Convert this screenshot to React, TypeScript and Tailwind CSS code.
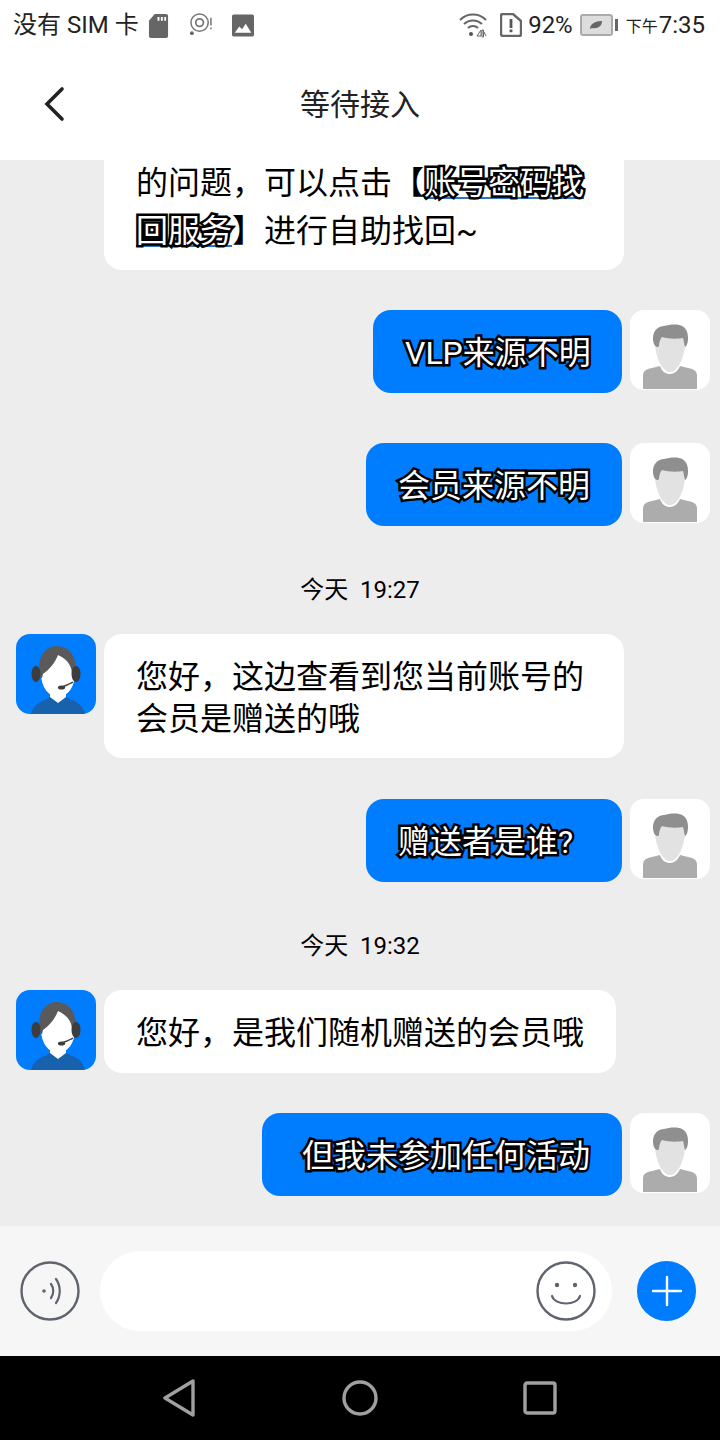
const font = "font-['Roboto','Noto_Sans_CJK_SC',sans-serif]";
const outlined = "[-webkit-text-stroke:5px_#000] [paint-order:stroke_fill]";

function UserAvatar() {
  return (
    <div className="w-[80px] h-[80px] rounded-[14px] bg-white shrink-0 overflow-hidden">
      <svg viewBox="0 0 80 80" className="w-full h-full">
        <path d="M13 79V66c0-5 3-7 9-8l8-2c2 6 6 8 10 8s8-3 10-8l8 2c6 1 9 3 9 8v13z" fill="#acacac" />
        <path d="M33 42h14v14c-2 4-4 6-7 6s-5-2-7-6z" fill="#e2e2e2" />
        <path d="M40 20c9 0 15 4 15 13 0 11-6 29-15 29s-15-18-15-29c0-9 6-13 15-13z" fill="#e2e2e2" />
        <path d="M27 37c-3-1-4-5-4-9 0-8 6-12 11-12 4-1 10-2 15-1 6 1 9 6 9 13 0 4-1 8-3 9-1-3-1-6-2-9-5 1-15 1-21-1-2 2-3 6-3 9-1 1-1 1-2 1z" fill="#8f8f8f" />
      </svg>
    </div>
  );
}

function AgentAvatar() {
  return (
    <div className="w-[80px] h-[80px] rounded-[14px] bg-[#007cff] shrink-0 overflow-hidden">
      <svg viewBox="0 0 80 80" className="w-full h-full">
        <path d="M15 80c2-8 8-12 14-14l5-3 8 5 8-5 6 3c6 2 11 6 13 14z" fill="#1761ad" />
        <path d="M34 54h16v9l-8 6-8-6z" fill="#fff" />
        <ellipse cx="42" cy="40" rx="17" ry="23" fill="#fff" />
        <path d="M25 44C19 26 28 12 41 12c14 0 22 14 18 32l-3 0c1-10-3-18-14-23-3 8-9 15-15 19l-1 4z" fill="#5a5a5a" />
        <ellipse cx="20" cy="40" rx="4.5" ry="8" fill="#3d3d3d" />
        <ellipse cx="60" cy="40" rx="4.5" ry="8" fill="#3d3d3d" />
        <path d="M57 48c-3 2-6 3-11 5" stroke="#3d3d3d" strokeWidth="1.5" fill="none" />
        <ellipse cx="45.5" cy="53.5" rx="3.6" ry="2" fill="#3d3d3d" />
      </svg>
    </div>
  );
}

function Right({ text, width, mt, pl = "pl-[32px]" }: { text: string; width: string; mt: string; pl?: string }) {
  return (
    <div className={`flex justify-end items-start gap-2 pr-[10px] ${mt}`}>
      <div className={`${width} ${pl} pr-[32px] pt-[23px] pb-[19px] rounded-[18px] bg-[#007cff] text-white text-[32px] leading-[41px] whitespace-nowrap ${outlined}`}>
        {text}
      </div>
      <UserAvatar />
    </div>
  );
}

function Left({ children, width, mt, pb }: { children: React.ReactNode; width: string; mt: string; pb: string }) {
  return (
    <div className={`flex items-start gap-2 pl-[16px] ${mt}`}>
      <AgentAvatar />
      <div className={`${width} px-[32px] pt-[22px] ${pb} rounded-[18px] bg-white text-black text-[32px] leading-[42px]`}>
        {children}
      </div>
    </div>
  );
}

function Time({ text, mt }: { text: string; mt: string }) {
  return (
    <div className={`flex justify-center text-[24px] leading-[28px] text-black whitespace-pre ${mt}`}>{text}</div>
  );
}

export default function App() {
  return (
    <div className={`w-[720px] h-[1440px] flex flex-col overflow-hidden bg-white ${font}`}>
      <div className="h-[50px] flex items-center justify-between pl-[13px] pr-[15px] shrink-0">
        <div className="flex items-center">
          <span className="text-[24px] text-[#222] whitespace-pre">没有 SIM 卡</span>
          <svg viewBox="0 0 22 26" className="w-[21px] h-[25px] ml-[9px]">
            <path d="M7 1h12a2 2 0 0 1 2 2v21a2 2 0 0 1-2 2H3a2 2 0 0 1-2-2V8z" fill="#666" />
            <path d="M10 4h2v4h-2zM13.5 4h2v4h-2zM17 4h2v4h-2z" fill="#fff" />
          </svg>
          <svg viewBox="0 0 26 26" className="w-[25px] h-[25px] ml-[20px]">
            <circle cx="11" cy="10" r="9" fill="none" stroke="#777" strokeWidth="1.6" />
            <circle cx="11" cy="10" r="4" fill="none" stroke="#777" strokeWidth="1.8" />
            <circle cx="3" cy="21" r="2" fill="#666" />
            <path d="M22 5h1.6v8H22zM22 15h1.6v2H22z" fill="#777" />
          </svg>
          <svg viewBox="0 0 24 24" className="w-[22px] h-[23px] ml-[18px]">
            <rect width="24" height="24" rx="2" fill="#666" />
            <path d="M3 20l5-7 3 3 4-6 6 10z" fill="#fff" />
          </svg>
        </div>
        <div className="flex items-center">
          <svg viewBox="0 0 28 26" className="w-[28px] h-[26px]">
            <path d="M1 8a18 18 0 0 1 26 0M5 12a13 13 0 0 1 18 0M9 16a7 7 0 0 1 10 0" fill="none" stroke="#666" strokeWidth="2" />
            <circle cx="12" cy="22" r="2" fill="#555" />
            <path d="M18 24l4-6v6zM23 18h1.5v7H23zM25 20l2 4" fill="none" stroke="#666" strokeWidth="1" />
          </svg>
          <svg viewBox="0 0 22 24" className="w-[22px] h-[24px] ml-[13px]">
            <path d="M3 1h10l8 7v13a2 2 0 0 1-2 2H3a2 2 0 0 1-2-2V3a2 2 0 0 1 2-2z" fill="none" stroke="#666" strokeWidth="2.4" />
            <path d="M9.6 6h2.8v9H9.6zM9.6 16.5h2.8v2.8H9.6z" fill="#555" />
          </svg>
          <span className="text-[24px] text-[#222] ml-[6px]">92%</span>
          <div className="ml-[7px] flex items-center">
            <div className="w-[33px] h-[22px] rounded-[3px] border-2 border-[#aaa] bg-[#ddd] flex items-center justify-center">
              <svg viewBox="0 0 14 10" className="w-[14px] h-[10px]">
                <path d="M1 9C1 4 6 1 13 1c0 5-4 8-10 7z" fill="#666" />
              </svg>
            </div>
            <div className="w-[3px] h-[12px] bg-[#666] ml-[2px]" />
          </div>
          <span className="text-[16px] text-[#222] ml-[8px] leading-none mt-[3px]">下午</span>
          <span className="text-[24px] text-[#222] ml-[1px]">7:35</span>
        </div>
      </div>

      <div className="h-[110px] shrink-0 relative flex items-center justify-center pb-[2px]">
        <svg viewBox="0 0 24 36" className="absolute left-[42px] top-[36px] w-[24px] h-[36px]">
          <path d="M20 3L5 18l15 15" fill="none" stroke="#222" strokeWidth="3.6" strokeLinecap="round" />
        </svg>
        <span className="text-[30px] text-[#222]">等待接入</span>
      </div>

      <div className="flex-1 min-h-0 bg-[#ededed] flex flex-col justify-end pb-[30px] overflow-hidden">
        <div className="pl-[104px]">
          <div className="w-[520px] px-[32px] pb-[15px] rounded-b-[18px] bg-white text-black text-[32px] leading-[48px]">
            的问题，可以点击【<span className={`text-white underline decoration-[#2f74c8] decoration-2 underline-offset-[3px] ${outlined}`}>账号密码找回服务</span>】进行自助找回~
          </div>
        </div>
        <Right text="VLP来源不明" width="w-[249px]" mt="mt-[40px]" />
        <Right text="会员来源不明" width="w-[256px]" mt="mt-[50px]" />
        <Time text="今天  19:27" mt="mt-[50px]" />
        <Left width="w-[520px]" mt="mt-[30px]" pb="pb-[18px]">您好，这边查看到您当前账号的会员是赠送的哦</Left>
        <Right text="赠送者是谁?" width="w-[256px]" mt="mt-[41px]" />
        <Time text="今天  19:32" mt="mt-[50px]" />
        <Left width="w-[512px]" mt="mt-[30px]" pb="pb-[19px]">您好，是我们随机赠送的会员哦</Left>
        <Right text="但我未参加任何活动" width="w-[360px]" mt="mt-[40px]" pl="pl-[40px]" />
      </div>

      <div className="h-[130px] shrink-0 bg-[#f6f6f6] flex items-center pl-[20px] pr-[24px]">
        <svg viewBox="0 0 60 60" className="w-[60px] h-[60px] shrink-0">
          <circle cx="30" cy="30" r="28.5" fill="none" stroke="#60646e" strokeWidth="2.4" />
          <circle cx="24" cy="30" r="1.8" fill="#60646e" />
          <path d="M31 23c3 4 3 10 0 14M36 18c5 7 5 17 0 24" fill="none" stroke="#60646e" strokeWidth="2.2" strokeLinecap="round" />
        </svg>
        <div className="w-[512px] h-[80px] rounded-[40px] bg-white ml-[20px] flex items-center justify-end pr-[16px] shrink-0">
          <svg viewBox="0 0 60 60" className="w-[60px] h-[60px]">
            <circle cx="30" cy="30" r="28.5" fill="none" stroke="#60646e" strokeWidth="2.4" />
            <circle cx="21" cy="24" r="2.2" fill="#60646e" />
            <circle cx="39" cy="24" r="2.2" fill="#60646e" />
            <path d="M16 35c3 10 25 10 28 0" fill="none" stroke="#60646e" strokeWidth="2.2" strokeLinecap="round" />
          </svg>
        </div>
        <div className="ml-[25px] w-[59px] h-[60px] rounded-full bg-[#007cff] flex items-center justify-center shrink-0">
          <svg viewBox="0 0 32 32" className="w-[32px] h-[32px]">
            <path d="M16 2v28M2 16h28" stroke="#fff" strokeWidth="2.4" strokeLinecap="round" />
          </svg>
        </div>
      </div>

      <div className="h-[84px] shrink-0 bg-black flex items-center justify-center">
        <svg viewBox="0 0 34 38" className="w-[34px] h-[38px] -ml-[1px]">
          <path d="M31 2v34L3 19z" fill="none" stroke="#a0a0a0" strokeWidth="3.4" strokeLinejoin="round" />
        </svg>
        <svg viewBox="0 0 36 36" className="w-[36px] h-[36px] ml-[146px]">
          <circle cx="18" cy="18" r="16" fill="none" stroke="#a0a0a0" strokeWidth="3.4" />
        </svg>
        <svg viewBox="0 0 34 34" className="w-[34px] h-[34px] ml-[145px]">
          <rect x="2" y="2" width="30" height="30" rx="2" fill="none" stroke="#a0a0a0" strokeWidth="3.4" />
        </svg>
      </div>
    </div>
  );
}
